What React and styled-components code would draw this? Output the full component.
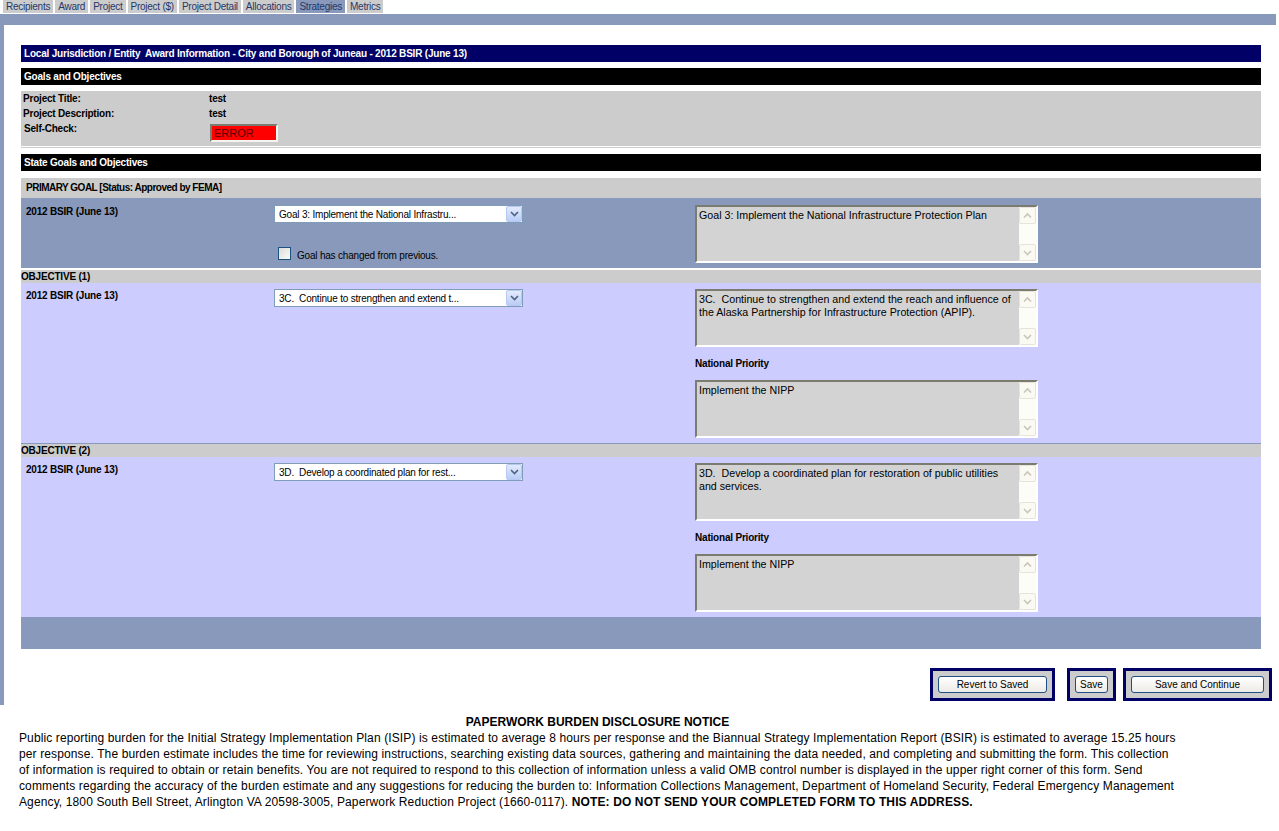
import React from 'react';
import styled, { createGlobalStyle } from 'styled-components';

const GlobalStyle = createGlobalStyle`
  body {
    margin: 0;
    background: #fff;
    font-family: "Liberation Sans", Arial, sans-serif;
    color: #000;
  }
`;

const tabs = ['Recipients', 'Award', 'Project', 'Project ($)', 'Project Detail', 'Allocations', 'Strategies', 'Metrics'];

const objectives = [
    {
        id: 1,
        pick: '3C.  Continue to strengthen and extend t...',
        text: '3C.  Continue to strengthen and extend the reach and influence of the Alaska Partnership for Infrastructure Protection (APIP).',
        priority: 'Implement the NIPP',
    },
    {
        id: 2,
        pick: '3D.  Develop a coordinated plan for rest...',
        text: '3D.  Develop a coordinated plan for restoration of public utilities and services.',
        priority: 'Implement the NIPP',
    },
];

function Chevron({ dir = 'down', color }) {
    const d = dir === 'down' ? 'M1 2 L4.5 5.5 L8 2' : 'M1 5.5 L4.5 2 L8 5.5';
    return (
        <svg width="9" height="8" viewBox="0 0 9 8">
            <path d={d} fill="none" stroke={color} strokeWidth="1.6" />
        </svg>
    );
}

function TextArea({ children }) {
    return (
        <TextBox>
            <TextBody>{children}</TextBody>
            <ScrollTrack>
                <ScrollBtn><Chevron dir="up" color="#c8c6b8" /></ScrollBtn>
                <ScrollBtn><Chevron dir="down" color="#c8c6b8" /></ScrollBtn>
            </ScrollTrack>
        </TextBox>
    );
}

function Select({ value }) {
    return (
        <SelectBox>
            <SelectText>{value}</SelectText>
            <SelectArrow><Chevron color="#4d6185" /></SelectArrow>
        </SelectBox>
    );
}

function App() {
    return (
        <>
            <GlobalStyle />
            <TabBar>
                {tabs.map(t => (
                    <Tab key={t} $active={t === 'Strategies'}>{t}</Tab>
                ))}
            </TabBar>
            <Frame>
                <TitleBar $navy>Local Jurisdiction / Entity&nbsp; Award Information - City and Borough of Juneau - 2012 BSIR (June 13)</TitleBar>
                <TitleBar>Goals and Objectives</TitleBar>
                <InfoBox>
                    <InfoRow>
                        <InfoLabel>Project Title:</InfoLabel>
                        <InfoValue>test</InfoValue>
                    </InfoRow>
                    <InfoRow>
                        <InfoLabel>Project Description:</InfoLabel>
                        <InfoValue>test</InfoValue>
                    </InfoRow>
                    <InfoRow>
                        <InfoLabel $indent>Self-Check:</InfoLabel>
                        <ErrorBox>ERROR</ErrorBox>
                    </InfoRow>
                </InfoBox>
                <Rule />
                <TitleBar $gapTop={6} $gapBottom={7}>State Goals and Objectives</TitleBar>
                <PrimaryBar>PRIMARY GOAL [Status: Approved by FEMA]</PrimaryBar>
                <Section $bg="#8899bb" $height={70} $padTop={7}>
                    <RowLabel>2012 BSIR (June 13)</RowLabel>
                    <MidCol>
                        <Select value="Goal 3: Implement the National Infrastru..." />
                        <CheckLine>
                            <CheckBox />
                            <CheckText>Goal has changed from previous.</CheckText>
                        </CheckLine>
                    </MidCol>
                    <RightCol>
                        <TextArea>Goal 3: Implement the National Infrastructure Protection Plan</TextArea>
                    </RightCol>
                </Section>
                {objectives.map((o, i) => (
                    <React.Fragment key={o.id}>
                        <ObjHeader $line={i === 0 ? '#fff' : '#8899bb'} $lineH={i === 0 ? 2 : 1}>OBJECTIVE ({o.id})</ObjHeader>
                        <Section $bg="#ccccff" $height={160} $padTop={6}>
                            <RowLabel>2012 BSIR (June 13)</RowLabel>
                            <MidCol>
                                <Select value={o.pick} />
                            </MidCol>
                            <RightCol>
                                <TextArea>{o.text}</TextArea>
                                <PriorityLabel>National Priority</PriorityLabel>
                                <TextArea>{o.priority}</TextArea>
                            </RightCol>
                        </Section>
                    </React.Fragment>
                ))}
                <FooterBand />
                <ButtonRow>
                    <ButtonFrame>
                        <FormButton $w={109}>Revert to Saved</FormButton>
                    </ButtonFrame>
                    <ButtonFrame $gap={12}>
                        <FormButton $w={33}>Save</FormButton>
                    </ButtonFrame>
                    <ButtonFrame $gap={7}>
                        <FormButton $w={133}>Save and Continue</FormButton>
                    </ButtonFrame>
                </ButtonRow>
            </Frame>
            <Notice>
                <NoticeTitle>PAPERWORK BURDEN DISCLOSURE NOTICE</NoticeTitle>
                <NoticeText>
                    Public reporting burden for the Initial Strategy Implementation Plan (ISIP) is estimated to average 8 hours per response and the Biannual Strategy Implementation Report (BSIR) is estimated to average 15.25 hours per response. The burden estimate includes the time for reviewing instructions, searching existing data sources, gathering and maintaining the data needed, and completing and submitting the form. This collection of information is required to obtain or retain benefits. You are not required to respond to this collection of information unless a valid OMB control number is displayed in the upper right corner of this form. Send comments regarding the accuracy of the burden estimate and any suggestions for reducing the burden to: Information Collections Management, Department of Homeland Security, Federal Emergency Management Agency, 1800 South Bell Street, Arlington VA 20598-3005, Paperwork Reduction Project (1660-0117). <Strong>NOTE: DO NOT SEND YOUR COMPLETED FORM TO THIS ADDRESS.</Strong>
                </NoticeText>
            </Notice>
        </>
    );
}

const TabBar = styled.div`
    display: flex;
    gap: 2px;
    padding-left: 3px;
    height: 14px;
`;

const Tab = styled.div`
    height: 13px;
    padding: 0 3px;
    font-size: 10px;
    line-height: 13px;
    letter-spacing: -0.25px;
    color: #24386a;
    background: ${p => (p.$active ? '#8899bb' : '#cccccc')};
`;

const Frame = styled.div`
    box-sizing: border-box;
    width: 1276px;
    border-top: 11px solid #8899bb;
    border-left: 4px solid #8899bb;
    padding: 20px 15px 4px 17px;
    font-size: 10px;
    letter-spacing: -0.2px;
`;

const TitleBar = styled.div`
    height: 17px;
    line-height: 17px;
    padding-left: 3px;
    font-weight: bold;
    color: #fff;
    background: ${p => (p.$navy ? '#000066' : '#000')};
    margin-top: ${p => p.$gapTop || 0}px;
    margin-bottom: ${p => (p.$gapBottom != null ? p.$gapBottom : 6)}px;
`;

const InfoBox = styled.div`
    height: 55px;
    background: #cccccc;
    box-sizing: border-box;
`;

const InfoRow = styled.div`
    display: flex;
    align-items: flex-start;
    height: 15px;
    line-height: 15px;
`;

const InfoLabel = styled.div`
    width: 186px;
    padding-left: ${p => (p.$indent ? 3 : 2)}px;
    font-weight: bold;
`;

const InfoValue = styled.div`
    font-weight: bold;
`;

const ErrorBox = styled.div`
    box-sizing: border-box;
    width: 68px;
    height: 18px;
    margin-top: 3px;
    padding-left: 2px;
    border: 2px solid;
    border-color: #7c7c70 #f4f4f0 #f4f4f0 #7c7c70;
    background: #ff0000;
    color: #5a0000;
    font-size: 11px;
    line-height: 15px;
    letter-spacing: 0;
`;

const Rule = styled.div`
    height: 1px;
    margin-top: 1px;
    background: #cccccc;
`;

const PrimaryBar = styled.div`
    height: 20px;
    line-height: 20px;
    padding-left: 5px;
    font-weight: bold;
    letter-spacing: -0.5px;
    background: #cccccc;
`;

const Section = styled.div`
    box-sizing: border-box;
    display: grid;
    grid-template-columns: 253px 421px 1fr;
    align-items: start;
    height: ${p => p.$height}px;
    padding-top: ${p => p.$padTop}px;
    background: ${p => p.$bg};
`;

const RowLabel = styled.div`
    padding-left: 5px;
    font-weight: bold;
    line-height: 13px;
`;

const MidCol = styled.div`
    display: flex;
    flex-direction: column;
    align-items: flex-start;
`;

const RightCol = styled.div`
    display: flex;
    flex-direction: column;
`;

const SelectBox = styled.div`
    box-sizing: border-box;
    display: flex;
    align-items: center;
    width: 249px;
    height: 18px;
    border: 1px solid #7f9db9;
    background: #fff;
`;

const SelectText = styled.div`
    flex: 1;
    padding-left: 4px;
    white-space: pre;
    overflow: hidden;
`;

const SelectArrow = styled.div`
    box-sizing: border-box;
    display: flex;
    align-items: center;
    justify-content: center;
    width: 16px;
    height: 16px;
    border: 1px solid #b7c9f0;
    border-radius: 2px;
    background: linear-gradient(#e3ebfd, #b9cdf7);
`;

const CheckLine = styled.div`
    display: flex;
    align-items: center;
    margin: 23px 0 0 4px;
`;

const CheckBox = styled.div`
    box-sizing: border-box;
    width: 13px;
    height: 13px;
    border: 1px solid #1c5180;
    background: linear-gradient(135deg, #dcdcd7, #fbfbfa);
`;

const CheckText = styled.span`
    margin: 4px 0 0 6px;
`;

const TextBox = styled.div`
    box-sizing: border-box;
    display: flex;
    width: 343px;
    height: 58px;
    border: 2px solid;
    border-color: #7b7b6f #fff #fff #7b7b6f;
    background: #d3d3d3;
`;

const TextBody = styled.div`
    flex: 1;
    padding: 2px 2px 0 2px;
    font-size: 10.67px;
    line-height: 13px;
    letter-spacing: 0;
    white-space: pre-wrap;
`;

const ScrollTrack = styled.div`
    display: flex;
    flex-direction: column;
    justify-content: space-between;
    width: 17px;
    background: #fdfdf8;
`;

const ScrollBtn = styled.div`
    box-sizing: border-box;
    display: flex;
    align-items: center;
    justify-content: center;
    height: 17px;
    border: 1px solid #e6e4da;
    border-radius: 2px;
    background: #fafaf3;
`;

const PriorityLabel = styled.div`
    margin: 10px 0;
    font-weight: bold;
    line-height: 13px;
`;

const ObjHeader = styled.div`
    height: 13px;
    line-height: 13px;
    font-weight: bold;
    background: #cccccc;
    border-top: ${p => p.$lineH}px solid ${p => p.$line};
`;

const FooterBand = styled.div`
    height: 32px;
    background: #8899bb;
`;

const ButtonRow = styled.div`
    display: flex;
    justify-content: flex-end;
    margin: 19px -11px 0 0;
    letter-spacing: 0;
`;

const ButtonFrame = styled.div`
    padding: 5px;
    border: 3px solid #000066;
    background: #cccccc;
    margin-left: ${p => p.$gap || 0}px;
`;

const FormButton = styled.button`
    box-sizing: border-box;
    display: block;
    width: ${p => p.$w}px;
    height: 17px;
    padding: 0;
    border: 1px solid #1e4f85;
    border-radius: 3px;
    background: linear-gradient(#ffffff, #ecebe6);
    font-family: "Liberation Sans", Arial, sans-serif;
    font-size: 10px;
    color: #000;
`;

const Notice = styled.div`
    width: 1157px;
    margin: 9px 0 0 19px;
    font-size: 12px;
    line-height: 16px;
    letter-spacing: 0.12px;
`;

const NoticeTitle = styled.div`
    font-weight: bold;
    text-align: center;
    letter-spacing: 0;
`;

const NoticeText = styled.div``;

const Strong = styled.span`
    font-weight: bold;
`;

export default App;
